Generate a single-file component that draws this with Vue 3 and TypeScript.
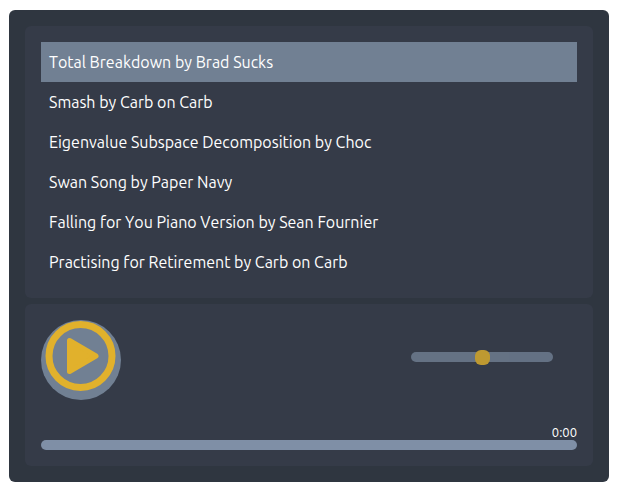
<script setup lang="ts">
import { ref } from 'vue'

interface Track {
  title: string
  artist: string
}

const tracks: Track[] = [
  { title: 'Total Breakdown', artist: 'Brad Sucks' },
  { title: 'Smash', artist: 'Carb on Carb' },
  { title: 'Eigenvalue Subspace Decomposition', artist: 'Choc' },
  { title: 'Swan Song', artist: 'Paper Navy' },
  { title: 'Falling for You Piano Version', artist: 'Sean Fournier' },
  { title: 'Practising for Retirement', artist: 'Carb on Carb' },
]

const current = ref(0)
const playing = ref(false)
const volume = ref(50)
const elapsed = ref('0:00')
</script>

<template>
  <main class="player">
    <ul class="panel playlist">
      <li v-for="(track, i) in tracks" :key="track.title">
        <button
          type="button"
          class="track"
          :class="{ active: i === current }"
          @click="current = i"
        >{{ track.title }} by {{ track.artist }}</button>
      </li>
    </ul>

    <section class="panel controls">
      <div class="buttons">
        <button
          type="button"
          class="play"
          :aria-label="playing ? 'Pause' : 'Play'"
          @click="playing = !playing"
        >
          <svg viewBox="0 0 80 80" aria-hidden="true">
            <circle cx="39.5" cy="36" r="31.5" fill="none" stroke="#e1b12c" stroke-width="7" />
            <path
              v-if="!playing"
              d="M28.500 20.500 V51.500 L55 36 Z"
              fill="#e1b12c"
              stroke="#e1b12c"
              stroke-width="5"
              stroke-linejoin="round"
            />
            <path v-else d="M28 22h8v28h-8zM43 22h8v28h-8z" fill="#e1b12c" />
          </svg>
        </button>
        <input v-model="volume" class="volume" type="range" min="0" max="100" aria-label="Volume">
      </div>
      <div class="timeline">
        <time class="elapsed">{{ elapsed }}</time>
        <progress class="progress" value="0" max="100" aria-label="Track position"></progress>
      </div>
    </section>
  </main>
</template>

<style>
body {
  background: #fff;
}
</style>

<style scoped>
.player {
  box-sizing: border-box;
  max-width: 600px;
  margin: 10px 10px 9px 9px;
  padding: 16px;
  display: flex;
  flex-direction: column;
  gap: 6px;
  border-radius: 6px;
  background: #2f3640;
  color: #fff;
  font-family: Ubuntu, "Noto Sans", sans-serif;
  font-size: 16px;
}

.panel {
  margin: 0;
  padding: 16px;
  border-radius: 6px;
  background: #353b48;
}

.playlist {
  list-style: none;
}

.track {
  display: block;
  width: 100%;
  padding: 8px;
  border: 0;
  background: none;
  color: inherit;
  font: inherit;
  font-kerning: none;
  line-height: 24px;
  text-align: left;
  cursor: pointer;
}

.track.active {
  background: #718093;
}

.buttons {
  display: flex;
  align-items: center;
  justify-content: space-between;
  padding-right: 24px;
}

.play {
  width: 80px;
  height: 80px;
  padding: 0;
  border: 0;
  border-radius: 50%;
  background: #718093;
  cursor: pointer;
}

.play svg {
  display: block;
  width: 100%;
}

.volume {
  appearance: none;
  width: 142px;
  height: 10px;
  margin: 0 0 6px;
  border-radius: 5px;
  background: #718093;
  opacity: 0.8;
}

.volume::-webkit-slider-thumb {
  appearance: none;
  width: 15px;
  height: 15px;
  border-radius: 6px;
  background: #e1b12c;
}

.timeline {
  display: flex;
  flex-direction: column;
  padding-top: 24px;
}

.elapsed {
  font-size: 13px;
  line-height: 16px;
  text-align: right;
}

.progress {
  appearance: none;
  display: block;
  width: 100%;
  height: 10px;
  border: 0;
  border-radius: 5px;
  overflow: hidden;
  background: #7f8fa6;
}

.progress::-webkit-progress-bar {
  background: #7f8fa6;
}

.progress::-webkit-progress-value {
  background: #e1b12c;
}
</style>
